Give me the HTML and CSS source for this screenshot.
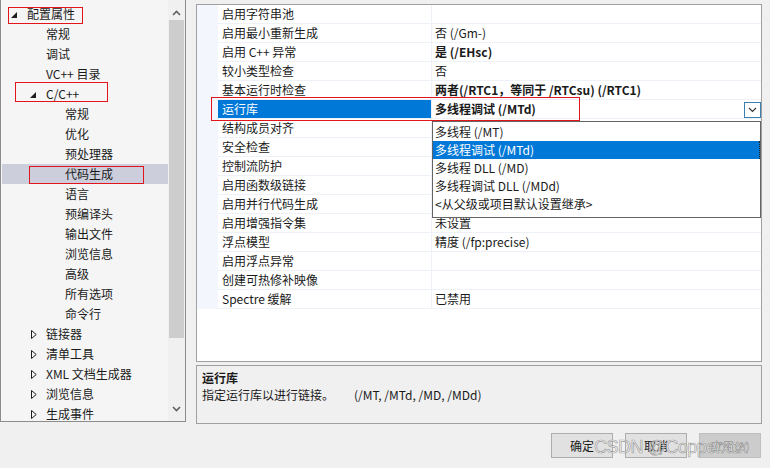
FILE: index.html
```html
<!DOCTYPE html>
<html lang="zh-CN">
<head>
<meta charset="utf-8">
<title>属性页</title>
<link rel="stylesheet" href="styles.css">
</head>
<body>
<div class="page">
  <div class="main">
    <div class="tree">
      <div class="tree-list">
        <div class="trow lvl0"><span class="ico"><svg width="6" height="6" viewBox="0 0 6 6"><path d="M6 0L6 6L0 6Z" fill="#1e1e1e"/></svg></span><span>配置属性</span><span class="redbox rb1"></span></div>
        <div class="trow lvl1"><span class="ico"></span><span>常规</span></div>
        <div class="trow lvl1"><span class="ico"></span><span>调试</span></div>
        <div class="trow lvl1"><span class="ico"></span><span>VC++ 目录</span></div>
        <div class="trow lvl1"><span class="ico"><svg width="6" height="6" viewBox="0 0 6 6"><path d="M6 0L6 6L0 6Z" fill="#1e1e1e"/></svg></span><span>C/C++</span><span class="redbox rb2"></span></div>
        <div class="trow lvl2"><span class="ico"></span><span>常规</span></div>
        <div class="trow lvl2"><span class="ico"></span><span>优化</span></div>
        <div class="trow lvl2"><span class="ico"></span><span>预处理器</span></div>
        <div class="trow lvl2 tsel"><span class="ico"></span><span>代码生成</span><span class="redbox rb3"></span></div>
        <div class="trow lvl2"><span class="ico"></span><span>语言</span></div>
        <div class="trow lvl2"><span class="ico"></span><span>预编译头</span></div>
        <div class="trow lvl2"><span class="ico"></span><span>输出文件</span></div>
        <div class="trow lvl2"><span class="ico"></span><span>浏览信息</span></div>
        <div class="trow lvl2"><span class="ico"></span><span>高级</span></div>
        <div class="trow lvl2"><span class="ico"></span><span>所有选项</span></div>
        <div class="trow lvl2"><span class="ico"></span><span>命令行</span></div>
        <div class="trow lvl1"><span class="ico col"><svg width="6" height="9" viewBox="0 0 6 9"><path d="M0.5 0.5L5.2 4.5L0.5 8.5Z" fill="none" stroke="#1e1e1e"/></svg></span><span>链接器</span></div>
        <div class="trow lvl1"><span class="ico col"><svg width="6" height="9" viewBox="0 0 6 9"><path d="M0.5 0.5L5.2 4.5L0.5 8.5Z" fill="none" stroke="#1e1e1e"/></svg></span><span>清单工具</span></div>
        <div class="trow lvl1"><span class="ico col"><svg width="6" height="9" viewBox="0 0 6 9"><path d="M0.5 0.5L5.2 4.5L0.5 8.5Z" fill="none" stroke="#1e1e1e"/></svg></span><span>XML 文档生成器</span></div>
        <div class="trow lvl1"><span class="ico col"><svg width="6" height="9" viewBox="0 0 6 9"><path d="M0.5 0.5L5.2 4.5L0.5 8.5Z" fill="none" stroke="#1e1e1e"/></svg></span><span>浏览信息</span></div>
        <div class="trow lvl1"><span class="ico col"><svg width="6" height="9" viewBox="0 0 6 9"><path d="M0.5 0.5L5.2 4.5L0.5 8.5Z" fill="none" stroke="#1e1e1e"/></svg></span><span>生成事件</span></div>
      </div>
      <div class="vscroll">
        <div class="sb-btn sb-up"><svg width="9" height="6" viewBox="0 0 9 6"><path d="M1 5L4.5 1.5L8 5" fill="none" stroke="#606060" stroke-width="1.6"/></svg></div>
        <div class="sb-track"><div class="sb-thumb"></div></div>
        <div class="sb-btn sb-down"><svg width="9" height="6" viewBox="0 0 9 6"><path d="M1 1L4.5 4.5L8 1" fill="none" stroke="#606060" stroke-width="1.6"/></svg></div>
      </div>
    </div>
    <div class="right">
      <div class="grid">
        <div class="grow"><div class="gut"></div><div class="name">启用字符串池</div><div class="val"></div></div>
        <div class="grow"><div class="gut"></div><div class="name">启用最小重新生成</div><div class="val">否 (/Gm-)</div></div>
        <div class="grow"><div class="gut"></div><div class="name">启用 C++ 异常</div><div class="val b">是 (/EHsc)</div></div>
        <div class="grow"><div class="gut"></div><div class="name">较小类型检查</div><div class="val">否</div></div>
        <div class="grow"><div class="gut"></div><div class="name">基本运行时检查</div><div class="val b">两者(/RTC1，等同于 /RTCsu) (/RTC1)</div></div>
        <div class="grow gsel"><div class="gut"></div><div class="name">运行库</div><div class="val b"><span class="vtext">多线程调试 (/MTd)</span><span class="ddbtn"><svg width="9" height="6" viewBox="0 0 9 6"><path d="M1 1L4.5 4.5L8 1" fill="none" stroke="#333" stroke-width="1.1"/></svg></span></div></div>
        <div class="grow"><div class="gut"></div><div class="name">结构成员对齐</div><div class="val"></div></div>
        <div class="grow"><div class="gut"></div><div class="name">安全检查</div><div class="val"></div></div>
        <div class="grow"><div class="gut"></div><div class="name">控制流防护</div><div class="val"></div></div>
        <div class="grow"><div class="gut"></div><div class="name">启用函数级链接</div><div class="val"></div></div>
        <div class="grow"><div class="gut"></div><div class="name">启用并行代码生成</div><div class="val"></div></div>
        <div class="grow"><div class="gut"></div><div class="name">启用增强指令集</div><div class="val">未设置</div></div>
        <div class="grow"><div class="gut"></div><div class="name">浮点模型</div><div class="val">精度 (/fp:precise)</div></div>
        <div class="grow"><div class="gut"></div><div class="name">启用浮点异常</div><div class="val"></div></div>
        <div class="grow"><div class="gut"></div><div class="name">创建可热修补映像</div><div class="val"></div></div>
        <div class="grow"><div class="gut"></div><div class="name">Spectre 缓解</div><div class="val">已禁用</div></div>

        <div class="dropdown">
          <div class="ditem">多线程 (/MT)</div>
          <div class="ditem dsel">多线程调试 (/MTd)</div>
          <div class="ditem">多线程 DLL (/MD)</div>
          <div class="ditem">多线程调试 DLL (/MDd)</div>
          <div class="ditem">&lt;从父级或项目默认设置继承&gt;</div>
        </div>
        <div class="redbox rb4"></div>
      </div>
      <div class="desc">
        <div class="desc-title">运行库</div>
        <div class="desc-text">指定运行库以进行链接。<span class="desc-sw">(/MT, /MTd, /MD, /MDd)</span></div>
      </div>
    </div>
  </div>
  <div class="buttons">
    <div class="btn">确定</div>
    <div class="btn">取消</div>
    <div class="btn disabled">应用(A)</div>
  </div>
  <div class="watermark">CSDN @Copperxcx</div>
</div>
</body>
</html>
```

FILE: styles.css
```css
* { box-sizing: border-box; }
html, body { margin: 0; padding: 0; }
body {
  background: #f0f0f0;
  font-family: "Noto Sans CJK SC", "Noto Sans", sans-serif;
  font-size: 12px;
  color: #1a1a1a;
}
.page {
  position: relative;
  width: 770px;
  height: 468px;
  overflow: hidden;
}
.main {
  display: flex;
  align-items: flex-start;
  gap: 10px;
  height: 424px;
}

/* ---------- tree ---------- */
.tree {
  width: 186px;
  height: 422px;
  display: flex;
  background: #f5f5f5;
  border-right: 1px solid #8c8c8c;
  border-bottom: 1px solid #8c8c8c;
  border-left: 1px solid #8c8c8c;
}
.tree-list {
  flex: 1;
  padding: 4px 0 0 1px;
  overflow: hidden;
}
.trow {
  position: relative;
  height: 20px;
  line-height: 20px;
  display: flex;
  align-items: center;
  white-space: nowrap;
}
.trow.lvl0 { padding-left: 6px; }
.trow.lvl1 { padding-left: 25px; }
.trow.lvl2 { padding-left: 44px; }
.ico {
  width: 19px;
  height: 20px;
  display: flex;
  align-items: center;
  padding-left: 3px;
  padding-top: 1px;
}
.ico.col { padding-left: 4px; padding-top: 0; }
.tsel { background: #cccedb; }
.redbox {
  position: absolute;
  border: 1px solid #e3141c;
  pointer-events: none;
}
.rb1 { left: 6px; top: 3px; width: 75px; height: 17px; }
.rb2 { left: 13px; top: -2px; width: 93px; height: 20px; }
.rb3 { left: 27px; top: 2px; width: 115px; height: 18px; }

.vscroll {
  width: 17px;
  display: flex;
  flex-direction: column;
  background: #f0f0f0;
}
.sb-btn {
  height: 20px;
  display: flex;
  align-items: center;
  justify-content: center;
}
.sb-up { padding-top: 6px; }
.sb-down { height: 18px; padding-bottom: 6px; }
.sb-track { flex: 1; padding: 0 1px 0 1px; }
.sb-thumb {
  height: 318px;
  background: #cdcdcd;
}

/* ---------- property grid ---------- */
.right {
  width: 566px;
  display: flex;
  flex-direction: column;
}
.grid {
  position: relative;
  margin-top: 4px;
  height: 358px;
  background: #fff;
  border: 1px solid #a0a0a0;
}
.grow {
  display: grid;
  grid-template-columns: 21px 214px 1fr;
  height: 19px;
}
.gut { background: #f3f6fc; }
.name, .val {
  height: 19px;
  line-height: 18px;
  border-bottom: 1px solid #eef1f7;
  white-space: nowrap;
  overflow: hidden;
}
.name {
  padding-left: 4px;
  border-right: 1px solid #eef1f7;
}
.val { padding-left: 3px; }
.val.b { font-weight: bold; }
.gsel .name { background: #0078d7; color: #fff; }
.gsel .val {
  display: flex;
  align-items: flex-start;
}
.vtext { flex: 1; }
.ddbtn {
  width: 17px;
  height: 16px;
  margin-top: 2px;
  border: 1px solid #3c7fb1;
  background: #fff;
  display: flex;
  align-items: center;
  justify-content: center;
}
.rb4 { left: 14px; top: 92px; width: 369px; height: 24px; }

.dropdown {
  position: absolute;
  left: 235px;
  top: 116px;
  width: 329px;
  height: 97px;
  background: #fff;
  border: 1px solid #646464;
  padding-top: 1px;
}
.ditem {
  height: 18px;
  line-height: 18px;
  padding-left: 2px;
  white-space: nowrap;
}
.dsel {
  background: #0078d7;
  color: #fff;
  border-right: 1px dotted #222;
}

/* ---------- description ---------- */
.desc {
  margin-top: 3px;
  height: 59px;
  border: 1px solid #a0a0a0;
  background: #f0f0f0;
  padding: 3px 0 0 5px;
}
.desc-title { font-weight: bold; line-height: 17px; }
.desc-text { line-height: 18px; }
.desc-sw { margin-left: 20px; }

/* ---------- buttons ---------- */
.buttons {
  display: flex;
  justify-content: flex-end;
  gap: 12px;
  padding-right: 9px;
  margin-top: 9px;
}
.btn {
  width: 62px;
  height: 25px;
  border: 1px solid #adadad;
  background: #e1e1e1;
  display: flex;
  align-items: center;
  justify-content: center;
}
.btn.disabled {
  background: #cccccc;
  border-color: #bfbfbf;
  color: #a0a0a0;
}
.watermark {
  position: absolute;
  left: 594px;
  top: 435px;
  font-family: "Liberation Sans", sans-serif;
  font-size: 18px;
  line-height: 24px;
  letter-spacing: -0.5px;
  color: rgba(255, 255, 255, 0.72);
  -webkit-text-stroke: 0.7px rgba(100, 100, 100, 0.6);
  white-space: nowrap;
  pointer-events: none;
}
```
